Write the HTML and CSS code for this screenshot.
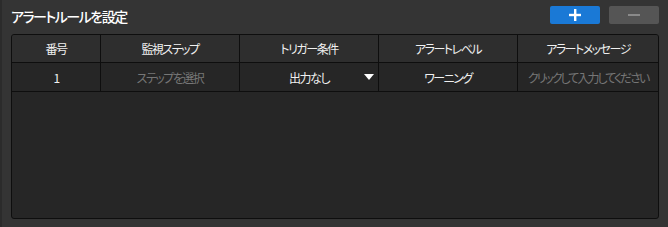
FILE: index.html
```html
<!DOCTYPE html>
<html lang="ja">
<head>
<meta charset="utf-8">
<link rel="stylesheet" href="styles.css">
</head>
<body>
<div class="panel">
  <div class="topbar">
    <div class="title">アラートルールを設定</div>
    <div class="actions">
      <button class="btn btn-add" aria-label="追加">
        <svg width="14" height="14" viewBox="0 0 14 14"><rect x="6" y="1" width="2.4" height="12" fill="#fff"/><rect x="1" y="5.8" width="12" height="2.4" fill="#fff"/></svg>
      </button>
      <button class="btn btn-remove" aria-label="削除">
        <svg width="14" height="14" viewBox="0 0 14 14"><rect x="1" y="6" width="12" height="2" fill="#8a8a8a"/></svg>
      </button>
    </div>
  </div>
  <div class="table">
    <div class="row head">
      <div class="cell">番号</div>
      <div class="cell">監視ステップ</div>
      <div class="cell">トリガー条件</div>
      <div class="cell">アラートレベル</div>
      <div class="cell last">アラートメッセージ</div>
    </div>
    <div class="row body-row">
      <div class="cell">1</div>
      <div class="cell muted">ステップを選択</div>
      <div class="cell select"><span>出力なし</span><span class="caret"></span></div>
      <div class="cell">ワーニング</div>
      <div class="cell last muted">クリックして入力してください</div>
    </div>
    <div class="empty"></div>
  </div>
</div>
</body>
</html>
```
FILE: styles.css
```css
html, body {
  margin: 0;
  padding: 0;
  height: 100%;
}
body {
  background: #343434;
  font-family: "Noto Sans CJK JP", "Noto Sans", sans-serif;
  font-feature-settings: "palt" 1;
  color: #f0f0f0;
}
.panel {
  height: 227px;
  box-sizing: border-box;
  border-left: 2px solid #2b2b2b;
  padding: 0 9px 8px 9px;
  display: flex;
  flex-direction: column;
}
.topbar {
  height: 34px;
  display: flex;
  align-items: flex-start;
  justify-content: space-between;
}
.title {
  font-size: 14px;
  letter-spacing: -1.5px;
  font-weight: 500;
  color: #ffffff;
  margin-top: 6px;
  line-height: 20px;
}
.actions {
  display: flex;
  gap: 9px;
  margin-top: 6px;
}
.btn {
  width: 50px;
  height: 18px;
  border: none;
  border-radius: 2px;
  padding: 0;
  display: flex;
  align-items: center;
  justify-content: center;
}
.btn-add { background: #1a79d6; }
.btn-remove { background: #555555; }
.table {
  flex: 1;
  border: 1px solid #0e0e0e;
  border-radius: 3px;
  background: #262626;
  display: flex;
  flex-direction: column;
  overflow: hidden;
}
.row {
  display: grid;
  grid-template-columns: 89px 139px 139px 139px 1fr;
  border-bottom: 1px solid #0e0e0e;
}
.head {
  height: 27px;
  background: #2e2e2e;
}
.body-row {
  height: 28px;
  background: #262626;
}
.cell {
  border-right: 1px solid #0e0e0e;
  display: flex;
  align-items: center;
  justify-content: center;
  font-size: 12px;
  letter-spacing: -1.5px;
  color: #f0f0f0;
  white-space: nowrap;
  overflow: hidden;
}
.cell.last { border-right: none; }
.cell.muted { color: #767676; }
.cell.last.muted { letter-spacing: -2px; }
.cell.select {
  position: relative;
}
.caret {
  position: absolute;
  right: 4px;
  top: 11px;
  width: 0;
  height: 0;
  border-left: 5px solid transparent;
  border-right: 5px solid transparent;
  border-top: 6px solid #ffffff;
}
.empty { flex: 1; }
```
